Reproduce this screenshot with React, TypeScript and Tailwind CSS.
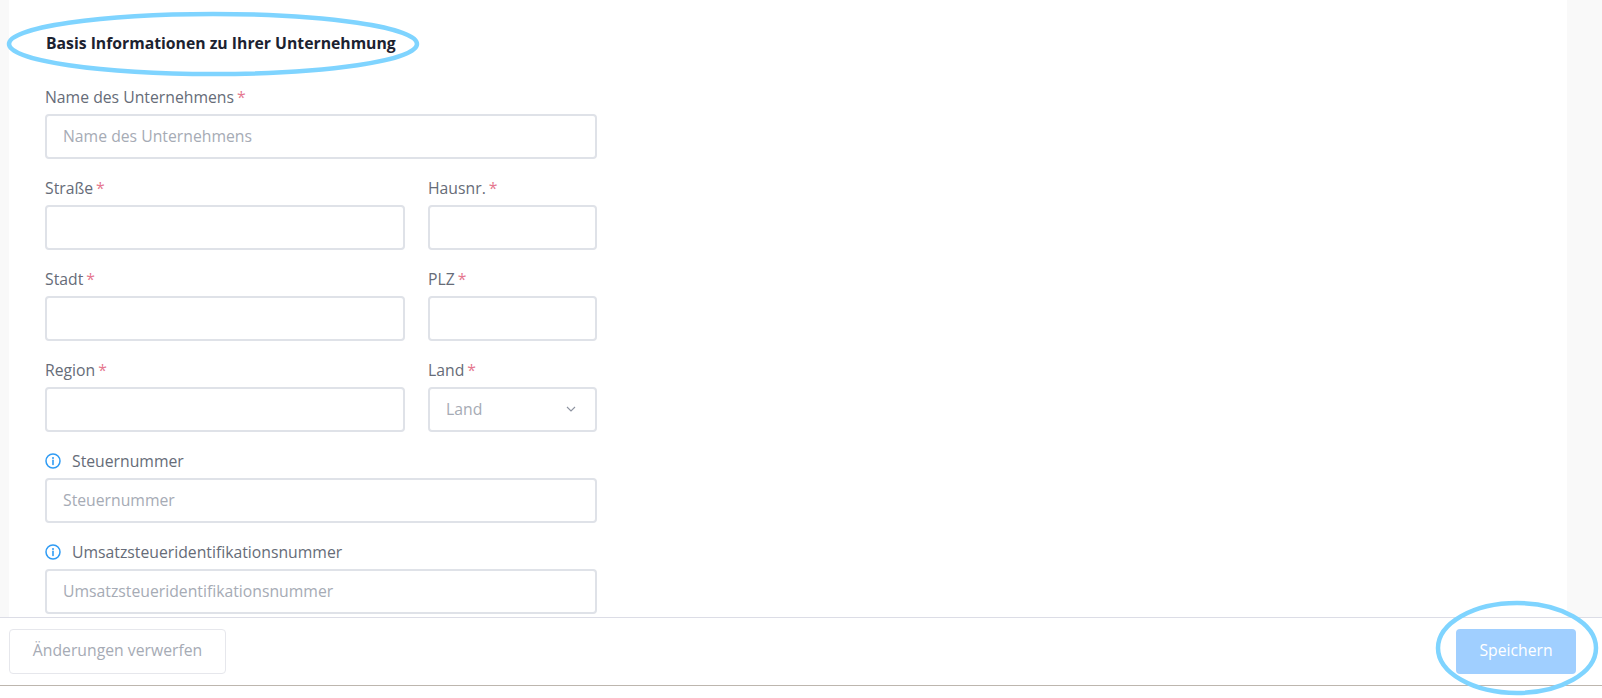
import React from "react";

const Star = () => <span className="ml-[3px] text-[#e5788f]">*</span>;

const Label = ({ text, required }: { text: string; required?: boolean }) => (
  <div className="flex h-[24px] translate-y-px items-center text-[15.75px] leading-[24px] text-[#666c78]">
    {text}
    {required && <Star />}
  </div>
);

const Info = () => (
  <svg width="16" height="16" viewBox="0 0 16 16" fill="none" className="mr-[11px] shrink-0">
    <circle cx="8" cy="8" r="7" stroke="#2f9bf4" strokeWidth="1.5" />
    <path d="M8 7.4v4" stroke="#2f9bf4" strokeWidth="1.6" strokeLinecap="round" />
    <circle cx="8" cy="4.9" r="1" fill="#2f9bf4" />
  </svg>
);

const Input = ({ placeholder }: { placeholder?: string }) => (
  <input
    readOnly
    placeholder={placeholder}
    className="mt-[6px] block h-[45px] w-full rounded-[4px] border-2 border-[#dfe2e8] bg-white px-[16px] pb-[2px] text-[15.75px] text-[#666c78] outline-none placeholder:text-[#a6abb5]"
  />
);

const Field = ({ label, required, placeholder }: { label: string; required?: boolean; placeholder?: string }) => (
  <div className="min-w-0">
    <Label text={label} required={required} />
    <Input placeholder={placeholder} />
  </div>
);

const InfoField = ({ label }: { label: string }) => (
  <div>
    <div className="flex h-[24px] translate-y-px items-center text-[15.75px] leading-[24px] text-[#666c78]">
      <Info />
      {label}
    </div>
    <Input placeholder={label} />
  </div>
);

const Ring = ({ className, rx, ry }: { className: string; rx: number; ry: number }) => (
  <svg className={`pointer-events-none absolute ${className}`} viewBox={`0 0 ${rx * 2} ${ry * 2}`} fill="none">
    <ellipse cx={rx} cy={ry} rx={rx - 3} ry={ry - 3} stroke="#7fd4ff" strokeWidth="4.5" />
  </svg>
);

export default function App() {
  return (
    <div
      className="relative flex h-[698px] w-full flex-col overflow-hidden bg-white"
      style={{ fontFamily: '"Open Sans", "Noto Sans", sans-serif' }}
    >
      <main className="flex h-[617px] shrink-0 overflow-hidden bg-[#f9f9f9] pl-[9px] pr-[35px]">
        <section className="flex-1 bg-white pl-[36px] pt-[31px]">
          <h2 className="ml-px h-[24px] text-[15.75px] font-bold leading-[24px] text-[#1c2230]">
            Basis Informationen zu Ihrer Unternehmung
          </h2>
          <div className="mt-[29px] flex w-[552px] flex-col gap-[16px]">
            <Field label="Name des Unternehmens" required placeholder="Name des Unternehmens" />
            <div className="grid grid-cols-[360px_169px] gap-x-[23px]">
              <Field label="Straße" required />
              <Field label="Hausnr." required />
            </div>
            <div className="grid grid-cols-[360px_169px] gap-x-[23px]">
              <Field label="Stadt" required />
              <Field label="PLZ" required />
            </div>
            <div className="grid grid-cols-[360px_169px] gap-x-[23px]">
              <Field label="Region" required />
              <div>
                <Label text="Land" required />
                <div className="mt-[6px] flex h-[45px] items-center justify-between rounded-[4px] border-2 border-[#dfe2e8] bg-white pl-[16px] pr-[19px] text-[15.75px] text-[#a6abb5]">
                  <span>Land</span>
                  <svg width="10" height="6" viewBox="0 0 10 6" fill="none" className="-mt-[2px]">
                    <path d="M1 1l4 4 4-4" stroke="#8d93a0" strokeWidth="1.1" />
                  </svg>
                </div>
              </div>
            </div>
            <InfoField label="Steuernummer" />
            <InfoField label="Umsatzsteueridentifikationsnummer" />
          </div>
        </section>
      </main>
      <footer className="flex h-[69px] shrink-0 items-start justify-between border-t border-b border-t-[#dcdde6] border-b-[#bdb6ae] bg-white pl-[9px] pr-[26px] pt-[11px]">
        <button className="h-[45px] w-[217px] rounded-[4px] border border-[#e6e7ec] bg-white pb-[2px] text-[15.75px] text-[#a6abb5]">
          Änderungen verwerfen
        </button>
        <button className="h-[45px] w-[120px] rounded-[4px] bg-[#a0cfff] pb-[2px] text-[15.75px] text-white">Speichern</button>
      </footer>
      <Ring className="left-[6px] top-[11px] h-[66px] w-[414px]" rx={207} ry={33} />
      <Ring className="left-[1435px] top-[600px] h-[96px] w-[164px]" rx={82} ry={48} />
    </div>
  );
}
